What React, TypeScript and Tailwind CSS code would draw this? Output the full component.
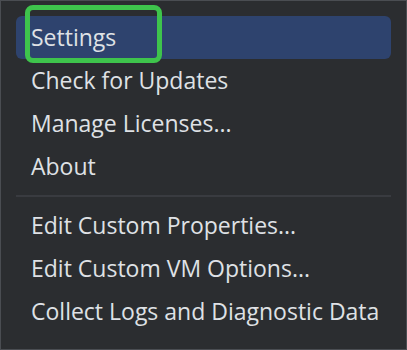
import React from 'react';

const groups: string[][] = [
  ['Settings', 'Check for Updates', 'Manage Licenses...', 'About'],
  ['Edit Custom Properties...', 'Edit Custom VM Options...', 'Collect Logs and Diagnostic Data'],
];

export default function App() {
  return (
    <div
      className="w-[407px] h-[350px] bg-[#2b2d30] border border-[#4a4d52] px-[15px] pt-[15px] text-[#dfe1e5] text-[23px] leading-none"
      style={{ fontFamily: '"Open Sans", "Noto Sans", sans-serif' }}
    >
      {groups.map((items, gi) => (
        <div key={gi}>
          {gi > 0 && (
            <div className="h-[16px] flex items-center">
              <div className="h-[2px] w-full bg-[#393b40]" />
            </div>
          )}
          {items.map((label) => {
            const active = label === 'Settings';
            return (
              <div
                key={label}
                className={`relative h-[43px] flex items-center px-[15px] rounded-[6px] ${active ? 'bg-[#2e436e]' : ''}`}
              >
                <span className="whitespace-nowrap">{label}</span>
                {active && (
                  <div className="absolute left-[9px] top-[-11px] w-[137px] h-[58px] rounded-[8px] border-solid border-[length:5px] border-[#3ec44c]" />
                )}
              </div>
            );
          })}
        </div>
      ))}
    </div>
  );
}
